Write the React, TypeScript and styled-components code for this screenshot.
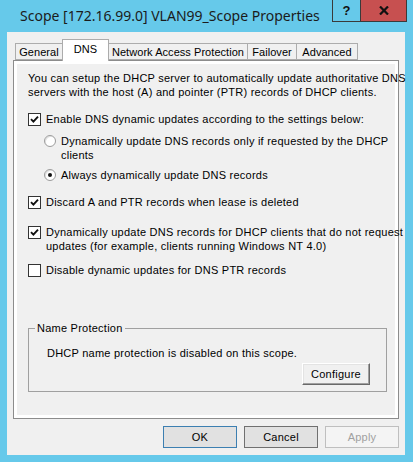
import React from "react";
import styled, { createGlobalStyle } from "styled-components";

const GlobalStyle = createGlobalStyle`
  html, body { margin: 0; padding: 0; background: #66c9ea; }
  body { font-family: "Liberation Sans", Arial, sans-serif; font-size: 11px; letter-spacing: 0.24px; color: #000; }
  * { box-sizing: border-box; }
`;

const Window = styled.div`
  width: 413px;
  height: 462px;
  background: #66c9ea;
  display: flex;
  flex-direction: column;
  padding: 0 8px 7px 7px;
`;

const TitleBar = styled.div`
  height: 32px;
  display: flex;
  align-items: flex-start;
  justify-content: space-between;
  margin-right: -2px;
`;

const TitleText = styled.div`
  margin-left: 13px;
  line-height: 31px;
  font-family: "Noto Sans", "Open Sans", sans-serif;
  font-size: 14px;
  letter-spacing: 0;
  color: #1b1b1b;
  white-space: nowrap;
  overflow: hidden;
`;

const CaptionGroup = styled.div`
  flex: none;
  display: flex;
  border: 1px solid #3a3a3a;
  border-top: none;
  height: 22px;
`;

const CaptionButton = styled.div<{ $w: number; $bg: string }>`
  width: ${(p) => p.$w}px;
  height: 21px;
  background: ${(p) => p.$bg};
  display: flex;
  align-items: center;
  justify-content: center;
  font-family: "Liberation Sans", Arial, sans-serif;
  font-weight: bold;
  font-size: 13px;
  color: #111;
  & + & { border-left: 1px solid #3a3a3a; }
`;

const Client = styled.div`
  flex: 1;
  background: #f0f0f0;
  display: flex;
  flex-direction: column;
  padding-top: 7px;
`;

const TabStrip = styled.div`
  display: flex;
  align-items: flex-end;
  height: 21px;
  padding-left: 8px;
`;

const Tab = styled.div<{ $w: number; $active?: boolean }>`
  width: ${(p) => p.$w}px;
  height: ${(p) => (p.$active ? 22 : 17)}px;
  margin-bottom: ${(p) => (p.$active ? -1 : 0)}px;
  margin-left: -1px;
  position: relative;
  z-index: ${(p) => (p.$active ? 2 : 1)};
  background: ${(p) => (p.$active ? "#ffffff" : "#f0f0f0")};
  border: 1px solid #acacac;
  border-bottom: ${(p) => (p.$active ? "none" : "1px solid #acacac")};
  display: flex;
  align-items: ${(p) => (p.$active ? "flex-start" : "center")};
  padding-top: ${(p) => (p.$active ? 3 : 0)}px;
  justify-content: center;
  letter-spacing: 0.05px;
  white-space: nowrap;
  &:first-child { margin-left: 0; }
`;

const Panel = styled.div`
  margin: 0 6px;
  height: 359px;
  border: 1px solid #8c8c8c;
  background: #ffffff;
  padding: 3px;
  position: relative;
  z-index: 1;
`;

const Page = styled.div`
  height: 100%;
  background: #f0f0f0;
  padding: 7px 8px 0 11px;
  display: flex;
  flex-direction: column;
`;

const Text = styled.div<{ $mt?: number; $ml?: number }>`
  line-height: 14px;
  white-space: nowrap;
  margin-top: ${(p) => p.$mt ?? 0}px;
  margin-left: ${(p) => p.$ml ?? 0}px;
`;

const OptionRow = styled.div<{ $mt: number; $indent?: number }>`
  display: flex;
  align-items: flex-start;
  gap: 5px;
  margin-top: ${(p) => p.$mt}px;
  margin-left: ${(p) => p.$indent ?? 0}px;
  line-height: 14px;
  white-space: nowrap;
`;

const CheckBox = styled.div`
  width: 13px;
  height: 13px;
  margin-top: 1px;
  flex: none;
  border: 1px solid #333333;
  background: #ffffff;
  display: flex;
  align-items: center;
  justify-content: center;
`;

const Radio = styled.div<{ $on?: boolean }>`
  width: 12px;
  height: 12px;
  margin-top: 1px;
  flex: none;
  border-radius: 50%;
  border: 1px solid #9c9c9c;
  background: #ffffff;
  box-shadow: inset 1px 1px 0 #e2e2e2;
  display: flex;
  align-items: center;
  justify-content: center;
  &::after {
    content: "";
    display: ${(p) => (p.$on ? "block" : "none")};
    width: 4px;
    height: 4px;
    border-radius: 50%;
    background: #111;
  }
`;

const Group = styled.fieldset`
  margin: 44px 0 0 0;
  padding: 0 16px 6px 6px;
  border: 1px solid #a0a0a0;
  display: flex;
  flex-direction: column;
  min-width: 0;
`;

const Legend = styled.legend`
  padding: 0 2px;
  line-height: 14px;
`;

const ClassicButton = styled.div`
  align-self: flex-end;
  margin-top: 3px;
  width: 68px;
  height: 22px;
  background: #f0f0f0;
  border-top: 1px solid #ffffff;
  border-left: 1px solid #ffffff;
  border-right: 1px solid #696969;
  border-bottom: 1px solid #696969;
  box-shadow: inset -1px -1px 0 #a0a0a0, inset 1px 1px 0 #e3e3e3;
  display: flex;
  align-items: center;
  justify-content: center;
`;

const ButtonRow = styled.div`
  display: flex;
  justify-content: flex-end;
  gap: 7px;
  padding: 7px 6px 0 0;
`;

const DialogButton = styled.div<{ $variant: "default" | "normal" | "disabled" }>`
  width: 74px;
  height: 22px;
  display: flex;
  align-items: center;
  justify-content: center;
  background: ${(p) => (p.$variant === "disabled" ? "#f4f4f4" : "#e1e1e1")};
  border: 1px solid
    ${(p) =>
      p.$variant === "default" ? "#3c7fb1" : p.$variant === "disabled" ? "#bfbfbf" : "#707070"};
  color: ${(p) => (p.$variant === "disabled" ? "#a0a0a0" : "#000")};
`;

const Check = () => (
  <svg width="9" height="9" viewBox="0 0 9 9">
    <path d="M1 4.2 L3.4 6.6 L8 1.6" stroke="#111" strokeWidth="1.9" fill="none" />
  </svg>
);

const CloseGlyph = () => (
  <svg width="10" height="9" viewBox="0 0 10 9">
    <path d="M1 0.5 L9 8.5 M9 0.5 L1 8.5" stroke="#111" strokeWidth="2.2" />
  </svg>
);

const tabs = [
  { label: "General", w: 48 },
  { label: "DNS", w: 47, active: true },
  { label: "Network Access Protection", w: 140 },
  { label: "Failover", w: 50 },
  { label: "Advanced", w: 62 },
];

export default function App() {
  return (
    <>
      <GlobalStyle />
      <Window>
        <TitleBar>
          <TitleText>Scope [172.16.99.0] VLAN99_Scope Properties</TitleText>
          <CaptionGroup>
            <CaptionButton $w={27} $bg="#66c9ea">?</CaptionButton>
            <CaptionButton $w={46} $bg="#c75050">
              <CloseGlyph />
            </CaptionButton>
          </CaptionGroup>
        </TitleBar>
        <Client>
          <TabStrip>
            {tabs.map((t) => (
              <Tab key={t.label} $w={t.w} $active={t.active}>
                {t.label}
              </Tab>
            ))}
          </TabStrip>
          <Panel>
            <Page>
              <Text>
                You can setup the DHCP server to automatically update authoritative DNS
                <br />
                servers with the host (A) and pointer (PTR) records of DHCP clients.
              </Text>
              <OptionRow $mt={13}>
                <CheckBox>
                  <Check />
                </CheckBox>
                <span>Enable DNS dynamic updates according to the settings below:</span>
              </OptionRow>
              <OptionRow $mt={8} $indent={16}>
                <Radio />
                <span>
                  Dynamically update DNS records only if requested by the DHCP
                  <br />
                  clients
                </span>
              </OptionRow>
              <OptionRow $mt={6} $indent={16}>
                <Radio $on />
                <span>Always dynamically update DNS records</span>
              </OptionRow>
              <OptionRow $mt={13}>
                <CheckBox>
                  <Check />
                </CheckBox>
                <span>Discard A and PTR records when lease is deleted</span>
              </OptionRow>
              <OptionRow $mt={16}>
                <CheckBox>
                  <Check />
                </CheckBox>
                <span>
                  Dynamically update DNS records for DHCP clients that do not request
                  <br />
                  updates (for example, clients running Windows NT 4.0)
                </span>
              </OptionRow>
              <OptionRow $mt={10}>
                <CheckBox />
                <span>Disable dynamic updates for DNS PTR records</span>
              </OptionRow>
              <Group>
                <Legend>Name Protection</Legend>
                <Text $mt={11} $ml={12}>
                  DHCP name protection is disabled on this scope.
                </Text>
                <ClassicButton>Configure</ClassicButton>
              </Group>
            </Page>
          </Panel>
          <ButtonRow>
            <DialogButton $variant="default">OK</DialogButton>
            <DialogButton $variant="normal">Cancel</DialogButton>
            <DialogButton $variant="disabled">Apply</DialogButton>
          </ButtonRow>
        </Client>
      </Window>
    </>
  );
}
